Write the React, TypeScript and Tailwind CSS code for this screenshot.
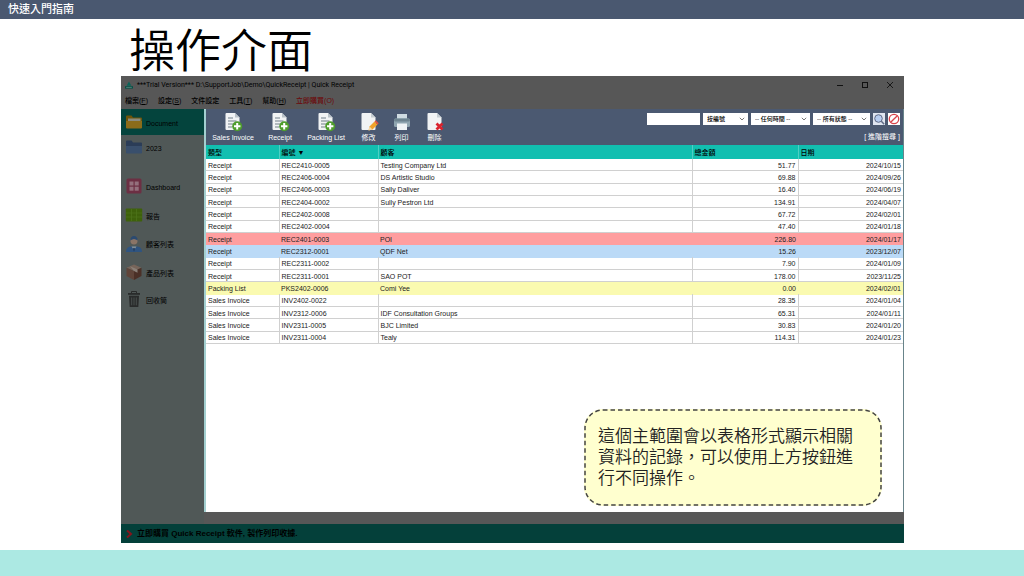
import React, { useState } from 'react';
import clsx from 'clsx';

type DocRow = {
  type: string;
  no: string;
  customer: string;
  total: string;
  date: string;
  tone?: 'red' | 'blue' | 'yellow';
};

const rows: DocRow[] = [
  { type: 'Receipt', no: 'REC2410-0005', customer: 'Testing Company Ltd', total: '51.77', date: '2024/10/15' },
  { type: 'Receipt', no: 'REC2406-0004', customer: 'DS Artistic Studio', total: '69.88', date: '2024/09/26' },
  { type: 'Receipt', no: 'REC2406-0003', customer: 'Sally Daliver', total: '16.40', date: '2024/06/19' },
  { type: 'Receipt', no: 'REC2404-0002', customer: 'Sully Pestron Ltd', total: '134.91', date: '2024/04/07' },
  { type: 'Receipt', no: 'REC2402-0008', customer: '', total: '67.72', date: '2024/02/01' },
  { type: 'Receipt', no: 'REC2402-0004', customer: '', total: '47.40', date: '2024/01/18' },
  { type: 'Receipt', no: 'REC2401-0003', customer: 'POI', total: '226.80', date: '2024/01/17', tone: 'red' },
  { type: 'Receipt', no: 'REC2312-0001', customer: 'QDF Net', total: '15.26', date: '2023/12/07', tone: 'blue' },
  { type: 'Receipt', no: 'REC2311-0002', customer: '', total: '7.90', date: '2024/01/09' },
  { type: 'Receipt', no: 'REC2311-0001', customer: 'SAO POT', total: '178.00', date: '2023/11/25' },
  { type: 'Packing List', no: 'PKS2402-0006', customer: 'Comi Yee', total: '0.00', date: '2024/02/01', tone: 'yellow' },
  { type: 'Sales Invoice', no: 'INV2402-0022', customer: '', total: '28.35', date: '2024/01/04' },
  { type: 'Sales Invoice', no: 'INV2312-0006', customer: 'IDF Consultation Groups', total: '65.31', date: '2024/01/11' },
  { type: 'Sales Invoice', no: 'INV2311-0005', customer: 'BJC Limited', total: '30.83', date: '2024/01/20' },
  { type: 'Sales Invoice', no: 'INV2311-0004', customer: 'Tealy', total: '114.31', date: '2024/01/23' },
];

const toneClass = {
  red: 'bg-[#ff9e9f] border-[#ff9e9f]',
  blue: 'bg-[#bbdaf7] border-[#bbdaf7]',
  yellow: 'bg-[#fafab0] border-[#fafab0]',
};

const menus = [
  { label: '檔案', hotkey: 'F' },
  { label: '設定', hotkey: 'S' },
  { label: '文件設定' },
  { label: '工具', hotkey: 'T' },
  { label: '幫助', hotkey: 'H' },
];

const FolderIcon = ({ back, front, paper }: { back: string; front: string; paper?: string }) => (
  <svg viewBox="0 0 18 16" className="h-4 w-[18px]">
    <path d="M1 2.5Q1 1.5 2 1.5h4.5l1.5 2h8q1 0 1 1V14H1z" fill={back} />
    {paper && <path d="M3 4.500h12.500v5H3z" fill={paper} />}
    <path d="M1 7h16v6.5q0 1-1 1H2q-1 0-1-1z" fill={front} />
  </svg>
);

const DashboardIcon = () => (
  <svg viewBox="0 0 18 18" className="size-[18px]">
    <rect x="1.5" y="1.5" width="15" height="15" rx="1.5" fill="#6c2f43" />
    <g fill="#94707d">
      <rect x="4.5" y="4.5" width="4" height="4" />
      <rect x="9.7" y="4.5" width="4" height="4" />
      <rect x="4.5" y="9.7" width="4" height="4" />
      <rect x="9.7" y="9.7" width="4" height="4" />
    </g>
  </svg>
);

const ReportIcon = () => (
  <svg viewBox="0 0 18 16" className="h-4 w-[18px]">
    <rect x="0.8" y="1.5" width="16.4" height="13" rx="0.8" fill="#3e610b" />
    <g stroke="#4d7219" strokeWidth="0.8">
      <path d="M1 6h16M1 10h16M6.5 2v12M11.5 2v12" />
    </g>
  </svg>
);

const CustomerIcon = () => (
  <svg viewBox="0 0 18 18" className="size-[18px]">
    <path d="M1 17q0-5 4.500-5.500h7q4.500 0.500 4.500 5.500z" fill="#2f5480" />
    <path d="M6.500 11.500l2.500 3.500 2.500-3.500z" fill="#8b979c" />
    <path d="M9 12.500l1 1.200-1 3-1-3z" fill="#1c3457" />
    <circle cx="9" cy="5.800" r="3.600" fill="#8a7466" />
    <path d="M5.200 5.500Q5.500 1 9 1t3.800 4.500Q10.500 4 9 4T5.200 5.500z" fill="#2b4a70" />
  </svg>
);

const BoxIcon = () => (
  <svg viewBox="0 0 18 18" className="size-[18px]">
    <path d="M9 1.500l7.500 3.200L9 8 1.500 4.700z" fill="#77655a" />
    <path d="M1.500 4.700L9 8v9l-7.500-4z" fill="#5f4439" />
    <path d="M16.500 4.700L9 8v9l7.500-4z" fill="#4b3027" />
    <path d="M5 3.200l7.500 3.300v3.200L9 8z" fill="#8b8078" />
  </svg>
);

const TrashIcon = () => (
  <svg viewBox="0 0 18 18" className="size-[18px]">
    <path d="M6.500 3V1.500h5V3" fill="none" stroke="#292b2b" />
    <rect x="3" y="3" width="12" height="1.800" fill="#292b2b" />
    <path d="M4 5.800h10L13.300 17H4.700z" fill="#292b2b" />
    <path d="M6.700 7.500v7.800M9 7.500v7.800M11.300 7.500v7.800" stroke="#505857" strokeWidth="0.800" />
  </svg>
);

const DocShape = () => (
  <path d="M3.500 1h8.500l4.500 4.500V17q0 1-1 1h-12q-1 0-1-1V2q0-1 1-1z" fill="#f1f3f4" />
);

const AddDocIcon = () => (
  <svg viewBox="0 0 20 20" className="size-5">
    <DocShape />
    <path d="M12 1v4.500h4.500z" fill="#b9c2c8" />
    <path d="M5 6h5M5 9h8.500M5 12h6M5 15h4" stroke="#73808a" strokeWidth="1.200" />
    <circle cx="14.200" cy="14.200" r="5" fill="#4e9d2d" />
    <path d="M14.200 11v6.400M11 14.200h6.400" stroke="#fff" strokeWidth="2" />
  </svg>
);

const EditDocIcon = () => (
  <svg viewBox="0 0 20 20" className="size-5">
    <DocShape />
    <path d="M12 1v4.500h4.500z" fill="#c5cdd2" />
    <path d="M9.500 18.500l1-4 5-5 3 3-5 5z" fill="#f0a22a" />
    <path d="M15.500 9.500l1.200-1.200 3 3-1.200 1.200z" fill="#e2513f" />
    <path d="M9.500 18.500l1-4 3 3z" fill="#f5d9ab" />
  </svg>
);

const PrinterIcon = () => (
  <svg viewBox="0 0 20 20" className="size-5">
    <rect x="5" y="2" width="10" height="6" fill="#cfdbe1" />
    <rect x="2" y="6.500" width="16" height="8.500" rx="1.500" fill="#8fa5b0" />
    <rect x="2" y="6.500" width="16" height="3" rx="1.500" fill="#6d838f" />
    <rect x="5" y="11.500" width="10" height="6.500" fill="#eef3f5" />
  </svg>
);

const DeleteDocIcon = () => (
  <svg viewBox="0 0 20 20" className="size-5">
    <DocShape />
    <path d="M12 1v4.500h4.500z" fill="#c5cdd2" />
    <path d="M11.500 11.500l6 6M17.500 11.500l-6 6" stroke="#d9232e" strokeWidth="2.800" />
  </svg>
);

const navItems = [
  { label: 'Document', icon: <FolderIcon back="#6f5408" front="#8b6c1a" paper="#8a8c80" />, box: 'h-[26px] bg-[#04443d]' },
  { label: '2023', icon: <FolderIcon back="#2b3d57" front="#394f6c" />, box: 'h-6 mb-3' },
  { label: 'Dashboard', icon: <DashboardIcon />, box: 'h-[30px]' },
  { label: '報告', icon: <ReportIcon />, box: 'h-7' },
  { label: '顧客列表', icon: <CustomerIcon />, box: 'h-[29px]' },
  { label: '產品列表', icon: <BoxIcon />, box: 'h-7' },
  { label: '回收筒', icon: <TrashIcon />, box: 'h-[26px]' },
];

const tools = [
  { label: 'Sales Invoice', icon: <AddDocIcon />, width: 'w-[54px]' },
  { label: 'Receipt', icon: <AddDocIcon />, width: 'w-10' },
  { label: 'Packing List', icon: <AddDocIcon />, width: 'w-[52px]' },
  { label: '修改', icon: <EditDocIcon />, width: 'w-[33px]' },
  { label: '列印', icon: <PrinterIcon />, width: 'w-[33px]' },
  { label: '刪除', icon: <DeleteDocIcon />, width: 'w-[33px]' },
];

const FilterSelect = ({ label, option, width }: { label: string; option: string; width: string }) => (
  <div className={clsx('relative h-3 bg-white', width)}>
    <select aria-label={label} className="block h-3 w-full appearance-none pl-1 text-[6px] leading-3 font-medium text-black">
      <option>{option}</option>
    </select>
    <svg viewBox="0 0 6 4" className="pointer-events-none absolute top-1 right-[3px] h-1 w-1.5">
      <path d="M0.800 0.800L3 3l2.200-2.200" fill="none" stroke="#555" strokeWidth="0.800" />
    </svg>
  </div>
);

const TitleBar = () => (
  <div className="flex h-[18px] items-center bg-[#575757] pl-1 text-black">
    <svg viewBox="0 0 10 10" className="mr-1 size-2">
      <path d="M0 6.500h10V9.500H0z" fill="#064f45" />
      <path d="M2 6L5 0.500 8 6z" fill="#0b655a" />
      <path d="M1.500 8h7" stroke="#5c8b84" />
    </svg>
    <span className="flex-1 font-['Roboto','Open_Sans',sans-serif] text-[7px] leading-[9px]">
      ***Trial Version*** D:\SupportJob\Demo\QuickReceipt | Quick Receipt
    </span>
    <div className="flex gap-[17px] pr-2.5">
      <button aria-label="最小化">
        <svg viewBox="0 0 8 8" className="size-2"><path d="M1 4.500h6" stroke="#111" /></svg>
      </button>
      <button aria-label="最大化">
        <svg viewBox="0 0 8 8" className="size-2"><rect x="1.500" y="1.500" width="5" height="5" fill="none" stroke="#111" /></svg>
      </button>
      <button aria-label="關閉">
        <svg viewBox="0 0 8 8" className="size-2"><path d="M1 1l6 6M7 1L1 7" stroke="#111" strokeWidth="0.900" /></svg>
      </button>
    </div>
  </div>
);

const MenuBar = () => (
  <nav className="flex h-[15px] items-center gap-2.5 bg-[#575757] pl-1 text-[7px] font-medium text-black">
    {menus.map(menu => (
      <button key={menu.label}>
        {menu.label}
        {menu.hotkey && <>(<u>{menu.hotkey}</u>)</>}
      </button>
    ))}
    <button className="text-[#6b0a0a]">立即購買(O)</button>
  </nav>
);

const Sidebar = ({ active, onSelect }: { active: string; onSelect: (label: string) => void }) => (
  <aside className="w-[83px] shrink-0 bg-[#505857]">
    {navItems.map(item => (
      <button
        key={item.label}
        onClick={() => onSelect(item.label)}
        aria-current={item.label === active ? 'page' : undefined}
        className={clsx('flex w-full items-center gap-[3px] pl-1 text-left text-[7px] leading-[9px] text-black', item.box)}
      >
        {item.icon}
        <span className="pt-0.5">{item.label}</span>
      </button>
    ))}
  </aside>
);

const Toolbar = () => (
  <div className="flex h-9 justify-between bg-[#4b5971] pr-[3px] text-white">
    <div className="flex">
      {tools.map(tool => (
        <button key={tool.label} className={clsx('flex flex-col items-center pt-[3px] text-[7px] whitespace-nowrap', tool.width)}>
          {tool.icon}
          <span className="leading-3">{tool.label}</span>
        </button>
      ))}
    </div>
    <div className="flex flex-col items-end pt-1">
      <div className="flex gap-[3px]">
        <input aria-label="搜尋" className="h-3 w-[53px] bg-white px-1 text-[7px] text-black" />
        <FilterSelect label="搜尋欄位" option="按編號" width="w-[45px]" />
        <FilterSelect label="時間" option="-- 任何時間 --" width="w-[59px]" />
        <FilterSelect label="狀態" option="-- 所有狀態 --" width="w-[57px]" />
        <button aria-label="搜尋" className="size-3 bg-[#dfe5f0]">
          <svg viewBox="0 0 12 12" className="size-3">
            <circle cx="5.500" cy="5.500" r="3.800" fill="#b7cdf0" stroke="#5f6a86" />
            <path d="M8.300 8.300l2.900 2.900" stroke="#5f6a86" strokeWidth="1.500" />
          </svg>
        </button>
        <button aria-label="清除" className="size-3 bg-white">
          <svg viewBox="0 0 12 12" className="size-3">
            <circle cx="6" cy="6" r="4.700" fill="none" stroke="#d8434b" strokeWidth="1.300" />
            <path d="M9.300 2.700L2.700 9.300" stroke="#d8434b" strokeWidth="1.300" />
          </svg>
        </button>
      </div>
      <a href="#advanced" className="mt-1.5 text-[7px] leading-3">[ 進階搜尋 ]</a>
    </div>
  </div>
);

const DocTable = () => (
  <table className="h-[199px] w-full table-fixed border-collapse text-left text-[7px] leading-[9px] text-[#222]">
    <colgroup>
      <col className="w-[73px]" />
      <col className="w-[99px]" />
      <col />
      <col className="w-[106px]" />
      <col className="w-[105px]" />
    </colgroup>
    <thead className="bg-[#12bfb0] text-black">
      <tr className="h-[14px] divide-x divide-[#4fcfc4]">
        <th className="p-0 pl-0.5 font-medium">類型</th>
        <th className="p-0 pl-0.5 font-medium">編號 ▼</th>
        <th className="p-0 pl-0.5 font-medium">顧客</th>
        <th className="p-0 pl-0.5 font-medium">總金額</th>
        <th className="p-0 pl-0.5 font-medium">日期</th>
      </tr>
    </thead>
    <tbody>
      {rows.map(row => (
        <tr
          key={row.no}
          className={clsx('border-b', row.tone ? toneClass[row.tone] : 'divide-x divide-[#d0d0d0] border-[#d0d0d0]')}
        >
          <td className="p-0 pt-px pl-0.5">{row.type}</td>
          <td className="p-0 pt-px pl-0.5">{row.no}</td>
          <td className="p-0 pt-px pl-0.5">{row.customer}</td>
          <td className="p-0 pt-px pr-0.5 text-right">{row.total}</td>
          <td className="p-0 pt-px pr-0.5 text-right">{row.date}</td>
        </tr>
      ))}
    </tbody>
  </table>
);

const Callout = () => (
  <div className="absolute right-[21px] bottom-1.5 w-[298px] rounded-[19px] bg-[#ffffcf] px-3.5 py-[17px]">
    <svg className="absolute inset-0 size-full overflow-visible">
      <rect
        x="1"
        y="1"
        rx="18"
        className="h-[calc(100%-2px)] w-[calc(100%-2px)]"
        fill="none"
        stroke="#444"
        strokeWidth="1.5"
        strokeDasharray="4.5 3"
      />
    </svg>
    <p className="text-[17px] leading-[21px] font-[350] text-[#222]">
      這個主範圍會以表格形式顯示相關資料的記錄，可以使用上方按鈕進行不同操作。
    </p>
  </div>
);

export default function App() {
  const [active, setActive] = useState('Document');

  return (
    <div className="flex min-h-screen flex-col bg-white font-['Liberation_Sans','Noto_Sans_CJK_TC',sans-serif]">
      <header className="flex h-[19px] items-center bg-[#4a5870] pl-2 text-[11px] font-medium text-white">
        快速入門指南
      </header>
      <main className="flex flex-1 flex-col pr-[120px] pb-[7px] pl-[121px]">
        <h1 className="h-[57px] pl-2 text-[46px] leading-[64px] font-[350] text-black">操作介面</h1>
        <section className="flex flex-1 flex-col bg-[#575757]">
          <TitleBar />
          <MenuBar />
          <div className="flex flex-1">
            <Sidebar active={active} onSelect={setActive} />
            <div className="relative mb-3 flex flex-1 flex-col border-r border-l-2 border-r-[#68848a] border-l-[#a3cfd0] bg-white">
              <Toolbar />
              <DocTable />
              <Callout />
            </div>
          </div>
          <footer className="flex h-[19px] items-center gap-1 bg-[#04403a] pl-1 text-[8px] font-bold text-black">
            <svg viewBox="0 0 8 8" className="size-2">
              <path d="M2 0.500L6 4 2 7.500" fill="none" stroke="#85141c" strokeWidth="2" />
            </svg>
            <span>立即購買 Quick Receipt 軟件, 製作列印收據.</span>
          </footer>
        </section>
      </main>
      <div className="h-[26px] bg-[#ace9e3]" />
    </div>
  );
}
